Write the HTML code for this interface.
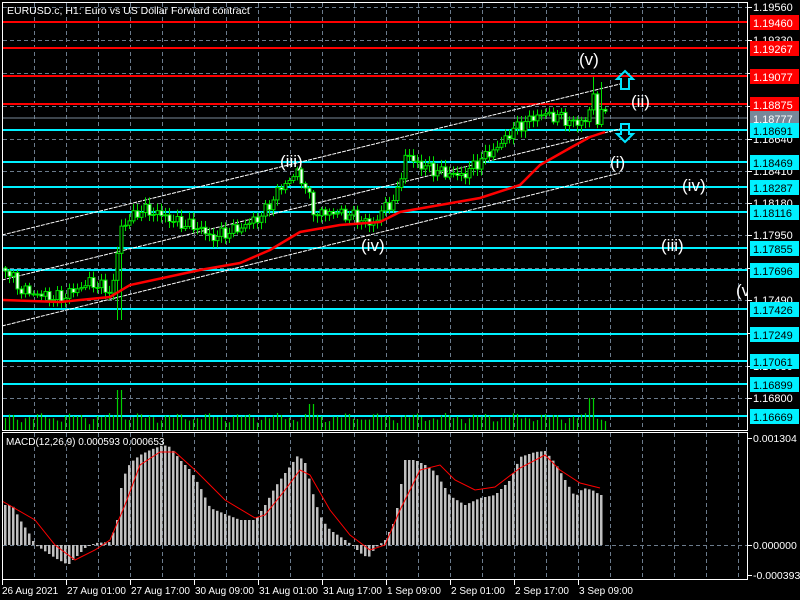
<!DOCTYPE html>
<html><head><meta charset="utf-8"><style>
html,body{margin:0;padding:0;background:#000;width:800px;height:600px;overflow:hidden}
svg{display:block}
text{font-family:"Liberation Sans",sans-serif;font-size:11px;fill:#fff}
</style></head><body>
<svg id="s" width="800" height="600" xmlns="http://www.w3.org/2000/svg">
<rect width="800" height="600" fill="#000"/>
<g id="grid"></g>
<g id="hl"></g>
<g id="ch" stroke="#fff" stroke-width="1" stroke-dasharray="4,1">
<line x1="2" y1="235" x2="620" y2="84"/>
<line x1="2" y1="280" x2="620" y2="129"/>
<line x1="2" y1="326" x2="620" y2="173"/>
</g>
<g id="vol"></g>
<g id="cand"></g>
<polyline id="ma" fill="none" stroke="#f00" stroke-width="2.5"/>
<g id="macd"></g>
<polyline id="sig" fill="none" stroke="#f00" stroke-width="1"/>
<path d="M625,71 L633,79 L629,79 L629,89 L621,89 L621,79 L617,79 Z" fill="none" stroke="#00e5ff" stroke-width="2"/>
<path d="M625,142 L633,134 L629,134 L629,124 L621,124 L621,134 L617,134 Z" fill="none" stroke="#00e5ff" stroke-width="2"/>
<text x="579" y="65" style="font-size:17px">(v)</text>
<text x="631" y="107" style="font-size:17px">(ii)</text>
<text x="280" y="167" style="font-size:17px">(iii)</text>
<text x="610" y="168" style="font-size:17px">(i)</text>
<text x="682" y="191" style="font-size:17px">(iv)</text>
<text x="361" y="251" style="font-size:17px">(iv)</text>
<text x="661" y="251" style="font-size:17px">(iii)</text>
<text x="736" y="296" style="font-size:17px">(v</text>
<rect x="748" y="0" width="52" height="600" fill="#000"/>
<g id="frame" fill="none" stroke="#fff" stroke-width="1">
<rect x="2.5" y="2.5" width="745" height="428"/>
<rect x="2.5" y="432.5" width="745" height="147"/>
</g>
<text x="7" y="14" style="font-size:10.5px">EURUSD.c, H1:  Euro vs US Dollar Forward contract</text>
<text x="6" y="445" style="font-size:10px">MACD(12,26,9) 0.000593 0.000653</text>
<g id="axis"></g>
</svg>
<script>
var NS="http://www.w3.org/2000/svg";
function el(p,t,a,txt){var e=document.createElementNS(NS,t);for(var k in a)e.setAttribute(k,a[k]);if(txt!=null)e.textContent=txt;document.getElementById(p).appendChild(e);return e;}
function interp(pts,x){if(x<=pts[0][0])return pts[0][1];for(var i=1;i<pts.length;i++){if(x<=pts[i][0]){var a=pts[i-1],b=pts[i];return a[1]+(b[1]-a[1])*(x-a[0])/(b[0]-a[0]);}}return pts[pts.length-1][1];}
for(var x=34;x<747;x+=32){el("grid","line",{x1:x+.5,y1:3,x2:x+.5,y2:430,stroke:"#6b7b8c","stroke-dasharray":"4,3"});el("grid","line",{x1:x+.5,y1:433,x2:x+.5,y2:579,stroke:"#6b7b8c","stroke-dasharray":"4,3"});}
var gy=[[7,"1.19560"],[40,"1.19330"],[73,"1.19100"],[106,"1.18870"],[139,"1.18640"],[171,"1.18410"],[203,"1.18180"],[235,"1.17950"],[268,"1.17720"],[300,"1.17490"],[333,"1.17260"],[366,"1.17030"],[398,"1.16800"]];
gy.forEach(function(g){el("grid","line",{x1:3,y1:g[0]+.5,x2:747,y2:g[0]+.5,stroke:"#6b7b8c","stroke-dasharray":"4,3"});el("axis","line",{x1:748,y1:g[0]+.5,x2:752,y2:g[0]+.5,stroke:"#fff"});el("axis","text",{x:753,y:g[0]+4,style:"font-size:11px"},g[1]);});
el("grid","line",{x1:3,y1:545.5,x2:747,y2:545.5,stroke:"#6b7b8c","stroke-dasharray":"4,3"});
[[438,"0.001304"],[545,"0.000000"],[575,"-0.000393"]].forEach(function(g){el("axis","line",{x1:748,y1:g[0]+.5,x2:752,y2:g[0]+.5,stroke:"#fff"});el("axis","text",{x:753,y:g[0]+4,style:"font-size:10.5px"},g[1]);});
var lv=[[22,"1.19460","#f00"],[48,"1.19267","#f00"],[76,"1.19077","#f00"],[104,"1.18875","#f00"],[118,"1.18777","#778899"],[130,"1.18691","#00f0ff"],[162,"1.18469","#00f0ff"],[187,"1.18287","#00f0ff"],[212,"1.18116","#00f0ff"],[248,"1.17855","#00f0ff"],[270,"1.17696","#00f0ff"],[309,"1.17426","#00f0ff"],[334,"1.17249","#00f0ff"],[361,"1.17061","#00f0ff"],[384,"1.16899","#00f0ff"],[416,"1.16669","#00f0ff"]];
lv.forEach(function(l){el("hl","line",{x1:3,y1:l[0],x2:747,y2:l[0],stroke:l[2],"stroke-width":l[2]=="#778899"?1:2});el("axis","rect",{x:750,y:l[0]-7,width:49,height:15,fill:l[2]});el("axis","text",{x:753,y:l[0]+5,style:"font-size:11px;fill:"+(l[2]=="#00f0ff"?"#000":"#fff")},l[1]);});
var P=[[5,268],[12,278],[20,290],[40,295],[60,298],[75,290],[90,282],[112,292],[120,228],[140,210],[160,214],[175,222],[200,228],[210,238],[240,228],[262,215],[280,188],[298,172],[304,185],[315,215],[330,212],[350,215],[372,225],[382,210],[396,198],[405,155],[420,165],[440,172],[462,176],[480,160],[500,145],[510,132],[520,125],[540,114],[560,117],[575,124],[588,118],[592,92],[597,118],[602,110],[606,118]];
var prev=interp(P,3);
for(var i=0;i<151;i++){var x=5+i*4;var c=interp(P,x)+Math.sin(i*2.3)*4+Math.cos(i*1.7)*3;var o=prev;var hi=Math.min(o,c)-2-Math.abs(Math.sin(i*3.1))*5,lo=Math.max(o,c)+2+Math.abs(Math.cos(i*2.9))*5;
if(x>=114&&x<=122)lo=320;if(x>=590&&x<=594)hi=77;if(x>=598&&x<=602)hi=82;
el("cand","line",{x1:x+.5,y1:hi,x2:x+.5,y2:lo,stroke:"#00e000"});
var t=Math.min(o,c),h=Math.max(1,Math.abs(c-o));
el("cand","rect",{x:x-1,y:t,width:3,height:h,fill:c<o?"#000":"#fff",stroke:"#00e000"});
prev=c;
var v=5+Math.abs(Math.sin(i*0.9))*5+Math.abs(Math.cos(i*0.37))*7;if(x>=114&&x<=122)v=40;if(x>=306&&x<=314)v=26;if(x>=588&&x<=596)v=32;
el("vol","line",{x1:x+.5,y1:430,x2:x+.5,y2:430-v,stroke:"#00d000","stroke-width":1.2});}
var MA=[[3,300],[60,302],[110,297],[130,285],[200,270],[240,263],[270,250],[300,232],[340,225],[380,222],[400,212],[440,205],[480,198],[520,185],[540,165],[570,148],[590,137],[605,132]];
document.getElementById("ma").setAttribute("points",MA.map(function(p){return p.join(",")}).join(" "));
var H=[[5,505],[12,505],[20,520],[30,535],[35,545],[40,548],[55,558],[68,565],[75,558],[85,548],[95,543],[110,542],[117,520],[122,480],[130,463],[140,455],[150,450],[163,445],[170,447],[180,460],[190,470],[200,487],[210,508],[220,512],[240,520],[255,520],[265,505],[275,487],[285,473],[298,455],[305,463],[315,502],[322,520],[330,530],[345,540],[352,545],[360,553],[368,558],[375,548],[385,540],[395,520],[405,460],[415,460],[425,465],[435,472],[450,496],[465,505],[480,498],[495,495],[510,480],[520,457],[535,452],[545,451],[555,463],[565,480],[575,497],[583,488],[592,490],[600,495]];
for(var x=5;x<=602;x+=4){var y=interp(H,x);el("macd","rect",{x:x-1,y:Math.min(y,545),width:2.5,height:Math.max(1,Math.abs(545-y)),fill:"#c0c0c0"});}
var S=[[2,501],[35,520],[55,545],[75,560],[95,550],[110,540],[125,505],[140,465],[160,452],[175,452],[195,470],[225,500],[255,518],[265,515],[285,490],[300,470],[310,475],[330,510],[350,535],[370,550],[385,545],[400,510],[420,470],[440,465],[455,480],[475,490],[495,487],[520,468],[545,455],[560,470],[580,483],[600,488]];
document.getElementById("sig").setAttribute("points",S.map(function(p){return p.join(",")}).join(" "));
var tl=["26 Aug 2021","27 Aug 01:00","27 Aug 17:00","30 Aug 09:00","31 Aug 01:00","31 Aug 17:00","1 Sep 09:00","2 Sep 01:00","2 Sep 17:00","3 Sep 09:00"];
tl.forEach(function(t,i){var x=2+i*64;el("axis","line",{x1:x+.5,y1:580,x2:x+.5,y2:585,stroke:"#fff"});el("axis","text",{x:x+(i?1:0),y:594,style:"font-size:10px"},t);});
</script>
</body></html>
